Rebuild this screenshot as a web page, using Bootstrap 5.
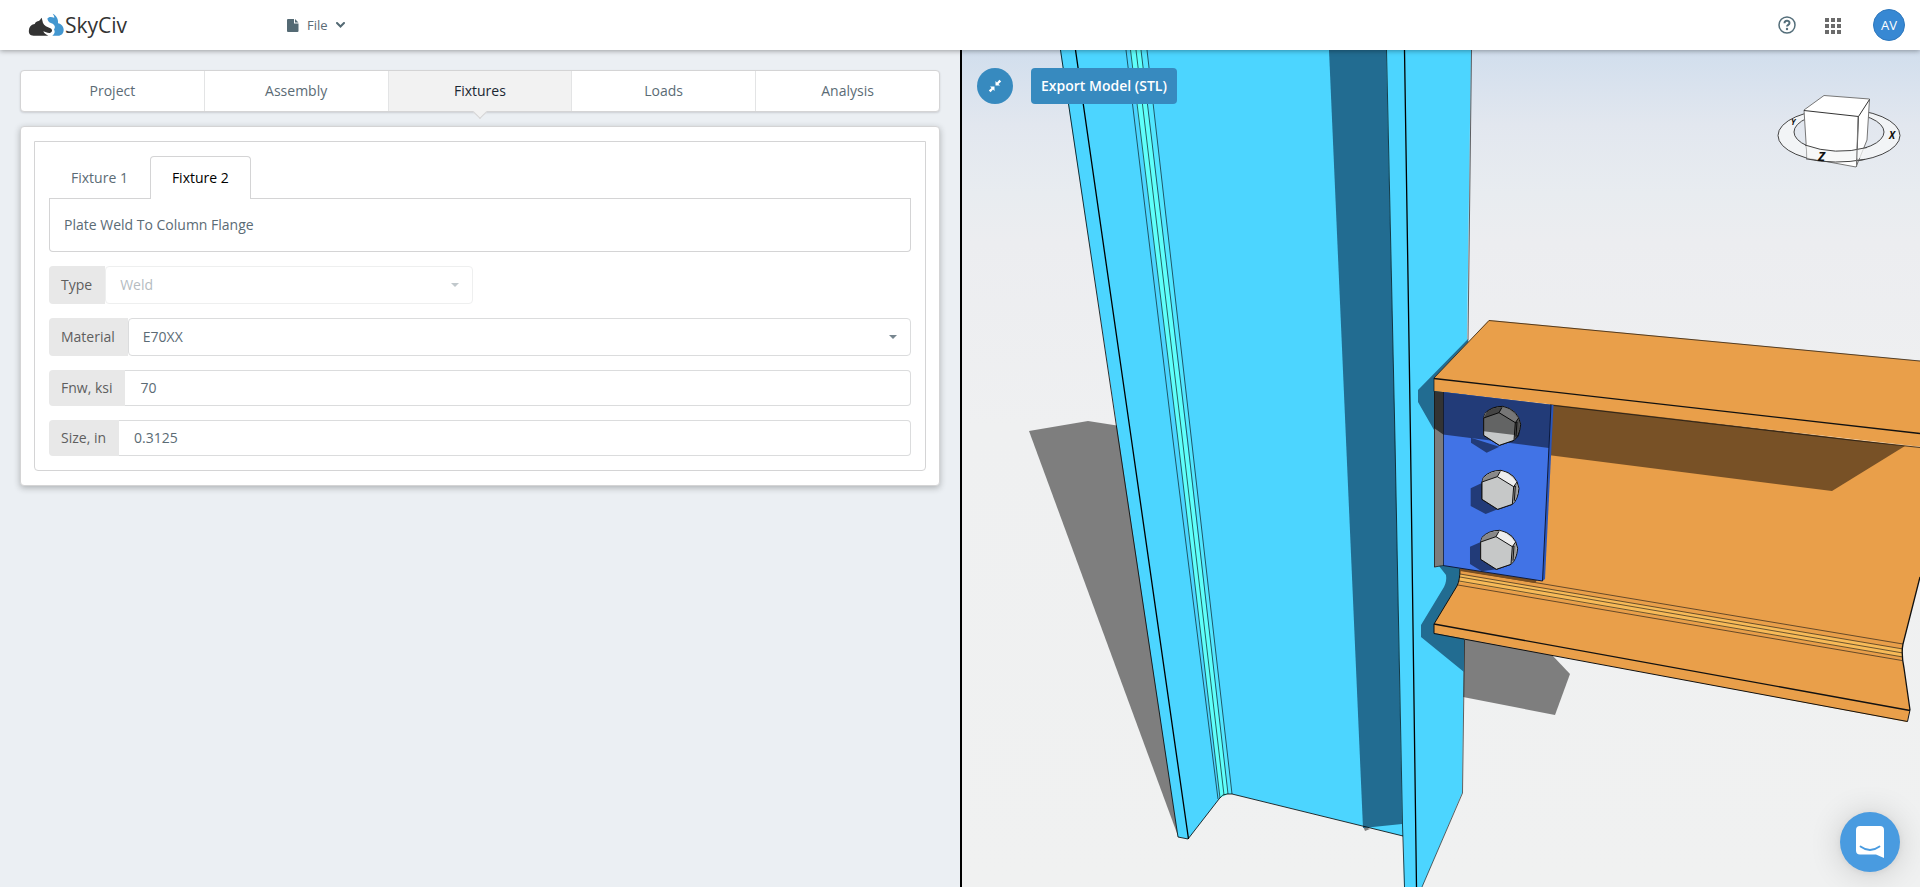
<!DOCTYPE html>
<html lang="en">
<head>
<meta charset="utf-8">
<meta name="viewport" content="width=device-width, initial-scale=1">
<title>SkyCiv Connection Design</title>
<link href="https://cdn.jsdelivr.net/npm/bootstrap@5.3.0/dist/css/bootstrap.min.css" rel="stylesheet">
<script src="https://cdn.jsdelivr.net/npm/bootstrap@5.3.0/dist/js/bootstrap.bundle.min.js" defer></script>
<style>
  :root { --ink: #5b6b75; --line: #d4d4d5; }
  body { font-family: "Open Sans", "Noto Sans", sans-serif; font-size: 14px; line-height: 20px; color: var(--ink); background: #ebeff3; }
  .topbar { height: 50px; box-shadow: 0 1px 5px rgba(0,0,0,.35); z-index: 5; padding: 0 15px 0 28px; }
  .brand-name { font-size: 21px; line-height: 24px; color: #333; }
  .file-menu { font-size: 13px; margin-left: 160px; color: var(--ink); }
  .avatar { width: 32px; height: 32px; font-size: 13px; color: #fff; background: #3788d3; border: 1px solid #2f78bd; }
  .apps-btn { margin: 0 32px 0 29px; }

  .editor-pane { flex: 0 0 50%; padding: 20px; }
  .viewer-pane { border-left: 2px solid #000; background: linear-gradient(#d1deed 0, #e2e7ef 9%, #e8ecf0 17%, #ecedf0 23%, #eff0f1 45%, #f0f1f1 100%); }

  .steps { height: 42px; border: 1px solid var(--line); border-radius: 4px; box-shadow: 0 1px 2px rgba(34,36,38,.15); background: #fff; margin-bottom: 14px; }
  .step-btn { border: 0; border-right: 1px solid #e3e4e5; background: none; color: var(--ink); font-weight: 500; position: relative; }
  .step-btn:last-child { border-right: 0; }
  .step-btn.active { background: #f2f2f2; color: #1b2733; }
  .step-btn.active::after { content: ""; position: absolute; left: 50%; bottom: -6px; width: 10px; height: 10px; margin-left: -5px; background: #f2f2f2; border: solid var(--line); border-width: 0 1px 1px 0; transform: rotate(45deg); }

  .panel { background: #fff; border: 1px solid var(--line); border-radius: 4px; box-shadow: 0 2px 6px rgba(34,36,38,.3); padding: 14px 13px; }
  .fixture-box { border: 1px solid var(--line); border-radius: 0 0 4px 4px; padding: 14px; }
  .fixture-tabs .nav-link { padding: 11px 21px; color: var(--ink); font-weight: 500; border: 1px solid transparent; border-bottom: 0; border-radius: 4px 4px 0 0; margin-bottom: -1px; }
  .fixture-tabs .nav-link.active { color: #000; background: #fff; border-color: var(--line); position: relative; }
  .fixture-tabs { border-bottom: 1px solid var(--line); }
  .fixture-name { border: 1px solid var(--line); border-top: 0; border-radius: 0 0 4px 4px; padding: 16px 14px; }
  .field-row { margin-top: 14px; height: 38px; }
  .field-row.short { height: 36px; }
  .field-tag { background: #e8e8e8; color: #5e5e5e; font-weight: 500; padding: 0 13px 0 12px; border-radius: 4px 0 0 4px; display: flex; align-items: center; }
  .field-row .form-control, .field-row .form-select { font-size: 14px; line-height: 20px; color: var(--ink); border: 1px solid #dbdcdd; padding: 0 14px; box-shadow: none; height: 100%; }
  .field-row .form-control { border-left: 0; border-radius: 0 4px 4px 0; padding-left: 15px; padding-bottom: 1px; }
  .field-row .form-select { border-radius: 4px; background: #fff url("data:image/svg+xml,%3Csvg xmlns='http://www.w3.org/2000/svg' viewBox='0 0 8 4'%3E%3Cpath d='M0 0h8L4 4z' fill='%2377868f'/%3E%3C/svg%3E") no-repeat right 13px center / 8px 4px; }
  .field-row .form-select:disabled { opacity: .45; }
  .type-row { width: 424px; max-width: 100%; }

  .viewer-tools { top: 18px; left: 15px; gap: 18px; }
  .tool-round { width: 36px; height: 36px; background: #378abf; border: 0; }
  .export-btn { height: 36px; padding: 0 10px; font-size: 14px; font-weight: 600; color: #fff; background: #378abf; border-radius: 4px; border: 0; line-height: 20px; }
  .gizmo { top: 40px; right: 18px; }
  .chat-btn { right: 20px; bottom: 15px; width: 60px; height: 60px; background: #499be0; border: 0; box-shadow: 0 1px 6px rgba(0,0,0,.06), 0 2px 32px rgba(0,0,0,.16); }
  .axis { font-family: "Open Sans", sans-serif; font-weight: 700; font-style: italic; fill: #111; }
</style>
</head>
<body class="vh-100 d-flex flex-column overflow-hidden">

<header class="topbar bg-white d-flex align-items-center position-relative flex-shrink-0">
  <a href="#" class="d-flex align-items-center text-decoration-none" aria-label="SkyCiv home">
    <svg width="37" height="24" viewBox="84 36 111 72" aria-hidden="true">
      <path fill="#333" d="M101 104C89 104 85 95 87 86C88 76 96 70 104 69C107 62 112 61 116 60C120 58 121 54 125 50L129 66C132 74 142 78 151 82C159 86 157 94 150 96C142 97 136 92 130 91C132 97 138 101 145 104Z"/>
      <path fill="#4397d0" d="M142 53C146 46 154 47 163 50C163 46 161 42 158 38C168 42 176 54 174 67C184 69 191 77 191 86C191 97 184 104 174 104L157 104C164 99 166 93 162 85C167 80 165 72 158 68C150 66 144 62 142 53Z"/>
    </svg>
    <span class="brand-name">SkyCiv</span>
  </a>
  <button type="button" class="file-menu btn border-0 p-0 d-flex align-items-center lh-1">
    <svg width="12" height="13" viewBox="0 0 12 13" class="me-2 flex-shrink-0" aria-hidden="true"><path fill="#546a74" d="M1 0h6v4.500h4.500V12q0 1-1 1H1q-1 0-1-1V1q0-1 1-1zM8 0l3.500 3.500H8z"/></svg>
    File
    <svg width="9" height="6" viewBox="0 0 9 6" class="ms-2" aria-hidden="true"><path d="M1 1l3.500 3.500L8 1" fill="none" stroke="#546a74" stroke-width="2" stroke-linecap="round"/></svg>
  </button>
  <div class="ms-auto d-flex align-items-center">
    <button type="button" class="btn border-0 p-0 lh-1" aria-label="Help">
      <svg width="18" height="18" viewBox="0 0 18 18" aria-hidden="true"><circle cx="9" cy="9" r="8" fill="none" stroke="#546e7a" stroke-width="1.500"/><path d="M6.500 7.200c0-3.200 5-3.200 5-.2 0 1.900-2.500 1.700-2.500 3.600" fill="none" stroke="#546e7a" stroke-width="2"/><circle cx="9" cy="13" r="1.200" fill="#546e7a"/></svg>
    </button>
    <button type="button" class="apps-btn btn border-0 p-0 lh-1" aria-label="Apps">
      <svg width="16" height="16" viewBox="0 0 16 16" aria-hidden="true"><path fill="#6b6b6b" d="M0 0h4v4H0zM6 0h4v4H6zM12 0h4v4h-4zM0 6h4v4H0zM6 6h4v4H6zM12 6h4v4h-4zM0 12h4v4H0zM6 12h4v4H6zM12 12h4v4h-4z"/></svg>
    </button>
    <button type="button" class="avatar rounded-circle p-0 d-flex align-items-center justify-content-center">AV</button>
  </div>
</header>

<main class="d-flex flex-grow-1 overflow-hidden">
  <section class="editor-pane overflow-auto">
    <nav class="steps d-flex" aria-label="Design steps">
      <button type="button" class="step-btn w-100">Project</button>
      <button type="button" class="step-btn w-100">Assembly</button>
      <button type="button" class="step-btn w-100 active" aria-current="step">Fixtures</button>
      <button type="button" class="step-btn w-100">Loads</button>
      <button type="button" class="step-btn w-100">Analysis</button>
    </nav>

    <div class="panel">
      <form class="fixture-box">
        <ul class="fixture-tabs nav">
          <li class="nav-item"><a class="nav-link" href="#">Fixture 1</a></li>
          <li class="nav-item"><a class="nav-link active" href="#" aria-current="page">Fixture 2</a></li>
        </ul>
        <div class="fixture-name">Plate Weld To Column Flange</div>

        <div class="field-row type-row d-flex">
          <label class="field-tag" for="fType">Type</label>
          <select class="form-select" id="fType" disabled><option>Weld</option></select>
        </div>
        <div class="field-row d-flex">
          <label class="field-tag" for="fMaterial">Material</label>
          <select class="form-select" id="fMaterial"><option>E70XX</option></select>
        </div>
        <div class="field-row short d-flex">
          <label class="field-tag text-nowrap" for="fFnw">Fnw, ksi</label>
          <input class="form-control" id="fFnw" type="text" value="70">
        </div>
        <div class="field-row short d-flex">
          <label class="field-tag text-nowrap" for="fSize">Size, in</label>
          <input class="form-control" id="fSize" type="text" value="0.3125">
        </div>
      </form>
    </div>
  </section>

  <section class="viewer-pane flex-grow-1 position-relative overflow-hidden">
    <!-- 3D model: column, beam, shear plate and bolts -->
    <svg class="position-absolute top-0 start-0 w-100 h-100" viewBox="962 50 958 837" preserveAspectRatio="xMinYMin slice" aria-label="3D connection model" role="img">
      <defs>
        <g id="boltHead">
          <path fill="#bbb" stroke="#111" stroke-width="3" d="M246 366L250 352Q270 331 303 331Q350 340 357 385Q354 420 337 433L293 448L246 418Z"/>
          <path fill="#eee" d="M300 333Q330 336 350 368L341 380L292 350Z"/>
          <path fill="#888" d="M250 354Q268 335 300 333L292 350L246 366Z"/>
          <path fill="#999" d="M350 370Q358 390 346 420L337 433L341 380Z"/>
          <path fill="#c6c8c8" stroke="#111" stroke-width="3" d="M246 366L292 350L341 380L337 433L293 448L246 418Z"/>
          <path fill="none" stroke="#111" stroke-width="3" d="M292 350L301 334M341 380L351 366M341 380L346 378L343 422"/>
        </g>
      </defs>

      <g fill="#7e7e7e">
        <path d="M1029 431L1088 421L1120 426L1178 836Z"/>
        <path d="M1463 638L1552 655L1570 674L1555 715L1463 697Z"/>
        <path d="M1363 826L1370 829L1365 831Z"/>
      </g>

      <!-- column -->
      <path fill="#4cd5ff" d="M1060 50L1471 50L1467 340L1464 640L1462 793L1422 887L1404 887L1403 836L1232 794L1225 794Q1221 796 1219 799L1188 839L1178 837L1119 440Z"/>
      <path fill="#226c91" d="M1329 50L1386 50L1395 440L1402 824L1363 828L1346 440Z"/>
      <path fill="#5ffffb" d="M1130 50L1141 50L1187 440L1228 794L1220 798L1178 440Z"/>
      <path fill="#53e6ff" d="M1141 50L1147 50L1191 440L1232 794L1228 794L1187 440Z"/>
      <g fill="none" stroke="#000" stroke-width="1">
        <path stroke-opacity=".8" d="M1060.500 50L1118.500 440L1178 837L1188 839L1219 799Q1222 794 1227 794L1232 794L1403 836"/>
        <path stroke-width="1.300" d="M1075.500 50L1131.500 440L1188.500 839"/>
        <path stroke-opacity=".6" d="M1126 50L1173 440L1218 799M1130.500 50L1178 440L1220 798M1136 50L1182.500 440L1224 795M1141 50L1187.500 440L1228 794M1147 50L1191.500 440L1232 794"/>
        <path stroke-opacity=".7" d="M1386.500 50L1395 440L1402.500 825L1404.500 887"/>
        <path stroke-width="1.300" d="M1404.500 50L1410.500 440L1416.500 887"/>
        <path stroke-opacity=".6" d="M1471.500 50L1468 340M1464.500 640L1462.500 793L1422 887"/>
      </g>

      <!-- shadows cast on the column flange -->
      <g fill="#226c91">
        <path d="M1468 339L1418 390L1418 402L1434 430L1445 380L1470 350Z"/>
        <path d="M1439 566L1446 575Q1447 581 1444 587L1421 625L1421 637L1464 672L1464 636L1436 628L1460 585L1461 566Z"/>
      </g>

      <!-- beam -->
      <path fill="#e99f4a" d="M1545 405L1920 447L1920 577L1903 644Q1901 653 1904 668L1910 710L1907 722L1434 633L1434 624L1457 586Q1460 580 1460 569L1500 560Z"/>
      <path fill="#785126" d="M1550 403L1905 446L1832 491L1548 455Z"/>
      <path fill="#f7ba58" d="M1460 574L1903 649L1902 657L1459 582Z"/>
      <path fill="#e99f4a" d="M1489 320L1922 361L1922 447L1434 391L1434 378Z"/>
      <g fill="none" stroke="#111">
        <path stroke-opacity=".7" d="M1434 391.500L1434 378L1489 320.500L1920 361M1434 391.500L1850 440L1920 447.500"/>
        <path stroke-width="1.300" d="M1434 378.500L1920 433.500"/>
        <path stroke-opacity=".6" d="M1460 570L1903 644M1460 574L1903 649M1460 577L1903 653M1459 581L1903 657M1458 585L1902 660.500"/>
        <path stroke-width="1.300" d="M1434 624L1910 710.500M1920 577L1903 644Q1901 653 1904 668L1910 710"/>
        <path d="M1910 710L1907.500 721.500L1434 633.500L1434 624L1457 586Q1460 580 1460 569"/>
      </g>

      <!-- shear plate -->
      <path fill="#784d20" d="M1460 568L1537 580L1535 583L1460 571Z"/>
      <path fill="#7c7c7c" d="M1434 392L1444 392L1444 565L1434 567.500Z"/>
      <path fill="#333" d="M1434 392L1444 392L1444 435L1434 428Z"/>
      <path fill="#4173e6" d="M1443 392L1551 405L1542.500 581L1443 565.500Z"/>
      <path fill="#223b78" d="M1443 392L1553 405L1549 448L1443 434.500Z"/>
      <path fill="#2b56b9" d="M1551 405L1553.500 405L1545 579L1542.500 581Z"/>
      <path fill="none" stroke="#0c1a3c" d="M1551 405L1542.500 581L1443 565.500"/>
      <path fill="none" stroke="#111" stroke-opacity=".7" d="M1434.500 392L1434.500 567L1443 565.500M1443.500 392L1443.500 565.500"/>

      <!-- bolts, drawn at three times size -->
      <g transform="translate(1400 360) scale(.33333)">
        <path fill="#223b78" d="M244 370L212 385L212 438L257 462L293 448ZM244 545L210 560L210 612L245 634L290 628ZM213 233L213 248L260 278L298 260Z"/>
        <use href="#boltHead"/>
        <use href="#boltHead" x="-4" y="180"/>
        <use href="#boltHead" x="5" y="-192"/>
        <path fill="#000" fill-opacity=".5" d="M251 174L262 152Q285 137 308 139Q350 148 362 193L357 228L344 240L344 225L251 214Z"/>
      </g>
    </svg>

    <div class="viewer-tools position-absolute d-flex">
      <button type="button" class="tool-round rounded-circle p-0 d-flex align-items-center justify-content-center" aria-label="Collapse view">
        <svg width="14" height="14" viewBox="0 0 14 14" aria-hidden="true"><path fill="#fff" d="M7.500 2v4.500H12l-1.500-1.500L13.200 2.600 11.400.8 9 3.500zM2 7.500h4.500V12L5 10.500 2.600 13.200.8 11.400 3.500 9z"/></svg>
      </button>
      <button type="button" class="export-btn">Export Model (STL)</button>
    </div>

    <!-- orientation cube -->
    <svg class="gizmo position-absolute" width="126" height="80" viewBox="1776 90 126 80" aria-hidden="true">
      <path fill="#f2f4f6" fill-rule="evenodd" stroke="#444" d="M1778 135.500a61 26.500 0 1 0 122 0a61 26.500 0 1 0 -122 0M1794 132a45 19.500 0 1 0 90 0a45 19.500 0 1 0 -90 0"/>
      <path fill="#fff" stroke="#777" d="M1804 110L1824 95.500L1869.500 99L1867 140L1856 167L1807 158Z"/>
      <path fill="none" stroke="#333" d="M1804 110.500L1858.500 116.500L1869.500 99.500M1858.500 116.500L1856.500 167"/>
      <path fill="#f4f5f6" fill-opacity=".75" d="M1806 144.500Q1833 155 1866 147.500L1864 157Q1837 164 1807 158.500Z"/>
      <path fill="none" stroke="#444" d="M1805 145Q1835 156 1867 147.500M1806 158.800Q1835 165 1865 159.300"/>
      <path fill="none" stroke="#777" d="M1858 117L1856.500 167"/>
      <text class="axis" x="1889" y="139" font-size="10">X</text>
      <text class="axis" x="1791" y="125" font-size="8">Y</text>
      <text class="axis" x="1818" y="161" font-size="13">Z</text>
    </svg>

    <button type="button" class="chat-btn position-absolute rounded-circle p-0 d-flex align-items-center justify-content-center" aria-label="Open chat">
      <svg width="28" height="32" viewBox="0 0 28 32" aria-hidden="true"><path fill="#fff" d="M4 0h20q4 0 4 4v28l-8-3.500H4q-4 0-4-4V4q0-4 4-4z"/><path d="M4.500 20.500q9.500 7 19 0" fill="none" stroke="#499be0" stroke-width="1.800" stroke-linecap="round"/></svg>
    </button>
  </section>
</main>
</body>
</html>
